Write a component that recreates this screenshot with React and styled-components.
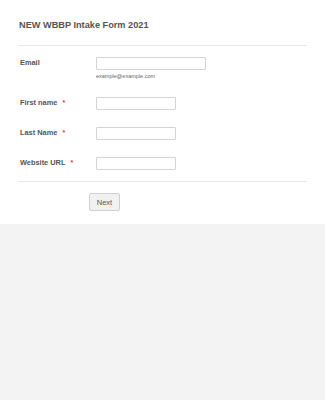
import React from "react";
import styled, { createGlobalStyle } from "styled-components";

const Global = createGlobalStyle`
  html, body {
    margin: 0;
    padding: 0;
    background: #f3f3f3;
    font-family: "Liberation Sans", Arial, sans-serif;
  }
`;

const Card = styled.div`
  background: #fff;
  padding: 19px 18px 12px 19px;
  height: 224px;
  box-sizing: border-box;
`;

const Title = styled.h1`
  margin: 0;
  font-size: 9.2px;
  font-weight: bold;
  color: #555;
  line-height: 12px;
`;

const Divider = styled.hr`
  border: 0;
  border-top: 1px solid #e6e6e6;
  margin: ${(p) => p.$m || "14px 0 0"};
`;

const Row = styled.div`
  display: grid;
  grid-template-columns: 77px 1fr;
  align-items: start;
  margin-top: ${(p) => p.$top}px;
`;

const Label = styled.label`
  font-size: 7.4px;
  font-weight: bold;
  color: #555;
  padding: 1px 0 0 1px;
  line-height: 10px;
`;

const Star = styled.span`
  color: #f23a3c;
  margin-left: 5px;
  font-size: 7px;
`;

const Field = styled.div`
  display: flex;
  flex-direction: column;
`;

const Input = styled.input`
  width: ${(p) => p.$w}px;
  height: 13px;
  box-sizing: border-box;
  border: 1px solid #d4d4d4;
  border-radius: 1px;
  padding: 0;
  margin: 0;
  background: #fff;
`;

const Sub = styled.span`
  font-size: 5.5px;
  color: #666;
  margin-top: 2px;
  line-height: 8px;
`;

const Actions = styled.div`
  display: flex;
  padding: 11px 0 0 70px;
`;

const Button = styled.button`
  width: 31px;
  height: 18px;
  padding: 0;
  font-family: "Liberation Sans", Arial, sans-serif;
  font-size: 7.5px;
  color: #555;
  background: #f1f1f1;
  border: 1px solid #cfcfcf;
  border-radius: 2px;
`;

export default function App() {
  return (
    <>
      <Global />
      <Card>
        <Title>NEW WBBP Intake Form 2021</Title>
        <Divider />
        <Row $top={11}>
          <Label>Email</Label>
          <Field>
            <Input $w={110} />
            <Sub>example@example.com</Sub>
          </Field>
        </Row>
        <Row $top={17}>
          <Label>
            First name<Star>*</Star>
          </Label>
          <Input $w={80} />
        </Row>
        <Row $top={17}>
          <Label>
            Last Name<Star>*</Star>
          </Label>
          <Input $w={80} />
        </Row>
        <Row $top={17}>
          <Label>
            Website URL<Star>*</Star>
          </Label>
          <Input $w={80} />
        </Row>
        <Divider $m="11px 0 0" />
        <Actions>
          <Button>Next</Button>
        </Actions>
      </Card>
    </>
  );
}
